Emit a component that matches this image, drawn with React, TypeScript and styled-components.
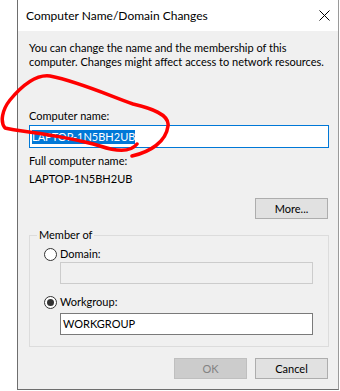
import React from 'react';
import styled, { createGlobalStyle } from 'styled-components';

const GlobalStyle = createGlobalStyle`
  html, body {
    margin: 0;
    padding: 0;
    background: #ffffff;
  }
  body {
    font-family: "Lato", "Liberation Sans", sans-serif;
    font-size: 11px;
    color: #000000;
  }
`;

const App: React.FC = () => {
  return (
    <Screen>
      <GlobalStyle />
      <Window>
        <TitleBar>
          <Title>Computer Name/Domain Changes</Title>
          <CloseIcon viewBox="0 0 11 11">
            <path d="M0.5 0.5 L10.5 10.5 M10.5 0.5 L0.5 10.5" stroke="#000" strokeWidth="1" />
          </CloseIcon>
        </TitleBar>

        <Body>
          <Description>
            You can change the name and the membership of this
            <br />
            computer. Changes might affect access to network resources.
          </Description>

          <Label $top={40}>Computer name:</Label>
          <TextBox $focused $height={23} $top={2}>
            <Selected>LAPTOP-1N5BH2UB</Selected>
          </TextBox>

          <Label $top={6}>Full computer name:</Label>
          <Label $top={4}>LAPTOP-1N5BH2UB</Label>

          <ButtonRow $top={12}>
            <Button>More...</Button>
          </ButtonRow>

          <Group>
            <Legend>Member of</Legend>
            <RadioRow $top={5}>
              <Radio />
              <span>Domain:</span>
            </RadioRow>
            <TextBox $disabled $height={22} $top={1} $indent />
            <RadioRow $top={11}>
              <Radio $checked />
              <span>Workgroup:</span>
            </RadioRow>
            <TextBox $height={22} $top={4} $indent>
              WORKGROUP
            </TextBox>
          </Group>

          <ButtonRow $top={11}>
            <Button disabled>OK</Button>
            <Button>Cancel</Button>
          </ButtonRow>
        </Body>
      </Window>

      <Scribble viewBox="0 0 340 391">
        <path
          d="M132 156 C150 152, 166 142, 168 126 C170 114, 150 108, 133 104 C110 96, 80 82, 50 76 C35 74, 20 88, 10 100 C2 110, 0 122, 5 128 C20 132, 60 134, 100 146 C115 151, 130 153, 137 144"
          fill="none"
          stroke="#ff0000"
          strokeWidth="3.5"
          strokeLinecap="round"
          strokeLinejoin="round"
        />
      </Scribble>
    </Screen>
  );
};

export default App;

const Screen = styled.div`
  position: relative;
  width: 340px;
  height: 391px;
  overflow: hidden;
  padding-left: 17px;
  box-sizing: border-box;
`;

const Window = styled.div`
  width: 322px;
  height: 390px;
  box-sizing: border-box;
  border-left: 1px solid #6e6e6e;
  border-right: 1px solid #9a9a9a;
  border-bottom: 1px solid #6e6e6e;
  display: flex;
  flex-direction: column;
`;

const TitleBar = styled.div`
  height: 31px;
  flex: none;
  background: #ffffff;
  display: flex;
  align-items: center;
  justify-content: space-between;
  padding: 0 8px;
`;

const Title = styled.span`
  font-size: 12px;
  line-height: 14px;
`;

const CloseIcon = styled.svg`
  width: 11px;
  height: 11px;
  display: block;
`;

const Body = styled.div`
  flex: 1;
  background: #f0f0f0;
  padding: 10px 9px 0 11px;
  display: flex;
  flex-direction: column;
`;

const Description = styled.div`
  line-height: 14px;
  white-space: nowrap;
`;

const Label = styled.div<{ $top: number }>`
  margin-top: ${p => p.$top}px;
  line-height: 14px;
`;

const TextBox = styled.div<{ $focused?: boolean; $disabled?: boolean; $height: number; $top: number; $indent?: boolean }>`
  box-sizing: border-box;
  height: ${p => p.$height}px;
  margin-top: ${p => p.$top}px;
  margin-left: ${p => (p.$indent ? '23px' : '0')};
  width: ${p => (p.$indent ? '253px' : 'auto')};
  border: 1px solid ${p => (p.$focused ? '#0078d7' : p.$disabled ? '#cccccc' : '#7a7a7a')};
  background: ${p => (p.$disabled ? '#f0f0f0' : '#ffffff')};
  padding: 0 2px;
  display: flex;
  align-items: center;
  line-height: 14px;
`;

const Selected = styled.span`
  background: #0078d7;
  color: #ffffff;
  line-height: 14px;
`;

const ButtonRow = styled.div<{ $top: number }>`
  margin-top: ${p => p.$top}px;
  display: flex;
  justify-content: flex-end;
  gap: 8px;
  padding-right: 1px;
`;

const Button = styled.button`
  width: 73px;
  height: 21px;
  box-sizing: border-box;
  margin: 0;
  padding: 0;
  font: inherit;
  line-height: 14px;
  color: #000000;
  background: #e1e1e1;
  border: 1px solid #adadad;
  border-radius: 0;

  &:disabled {
    background: #cccccc;
    border-color: #bfbfbf;
    color: #838383;
  }
`;

const Group = styled.fieldset`
  margin: 9px 0 0 0;
  padding: 0 7px 11px 7px;
  border: 1px solid #dcdcdc;
  min-width: 0;
`;

const Legend = styled.legend`
  padding: 0 2px;
  line-height: 14px;
`;

const RadioRow = styled.div<{ $top: number }>`
  margin-top: ${p => p.$top}px;
  margin-left: 7px;
  display: flex;
  align-items: center;
  gap: 3px;
  line-height: 14px;
`;

const Radio = styled.span<{ $checked?: boolean }>`
  width: 13px;
  height: 13px;
  box-sizing: border-box;
  border: 1px solid #333333;
  border-radius: 50%;
  background: #ffffff;
  display: flex;
  align-items: center;
  justify-content: center;

  &::after {
    content: '';
    width: 7px;
    height: 7px;
    border-radius: 50%;
    background: #333333;
    display: ${p => (p.$checked ? 'block' : 'none')};
  }
`;

const Scribble = styled.svg`
  position: absolute;
  left: 0;
  top: 0;
  width: 340px;
  height: 391px;
  pointer-events: none;
`;
